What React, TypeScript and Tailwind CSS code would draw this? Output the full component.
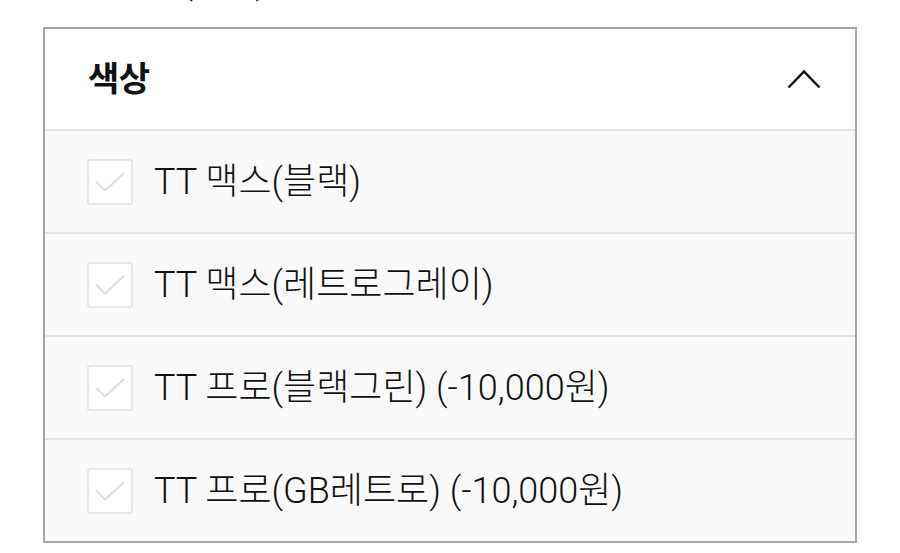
const options = [
  'TT 맥스(블랙)',
  'TT 맥스(레트로그레이)',
  'TT 프로(블랙그린) (-10,000원)',
  'TT 프로(GB레트로) (-10,000원)',
]

function CheckBox() {
  return (
    <span className="flex h-[46px] w-[46px] flex-shrink-0 items-center justify-center rounded-[3px] border-2 border-[#e6e6e6] bg-white">
      <svg width="30" height="20" viewBox="0 0 30 20" fill="none">
        <path d="M1.5 10l8.5 8.5L28.5 1.5" stroke="#dcdcdc" strokeWidth="2" strokeLinecap="round" strokeLinejoin="round" />
      </svg>
    </span>
  )
}

export default function App() {
  return (
    <div className="min-h-[553px] bg-white font-['Roboto','Noto_Sans_CJK_KR',sans-serif] text-[#111]">
      {/* tail of the line above, cut by the viewport */}
      <div className="h-[27px] overflow-hidden pl-[182px]">
        <div className="mt-[-38px] text-[34px] font-light leading-[40px]">(선택)</div>
      </div>

      <div className="mx-[43px] border-2 border-[#a6a6a6]">
        <div className="flex h-[100px] items-center justify-between bg-white pl-[43px] pr-[34px]">
          <h2 className="text-[34px] font-bold tracking-[-0.5px]">색상</h2>
          <svg width="34" height="20" viewBox="0 0 34 20" fill="none">
            <path d="M1.5 18.5L17 2.5l15.5 16" stroke="#111" strokeWidth="2.5" />
          </svg>
        </div>

        {options.map(label => (
          <label
            key={label}
            className="flex h-[103px] items-center gap-[21px] border-t-2 border-[#e2e2e2] bg-[#fafafa] pl-[42px]"
          >
            <CheckBox />
            <span className="text-[36px] font-light leading-none">{label}</span>
          </label>
        ))}
      </div>
    </div>
  )
}
